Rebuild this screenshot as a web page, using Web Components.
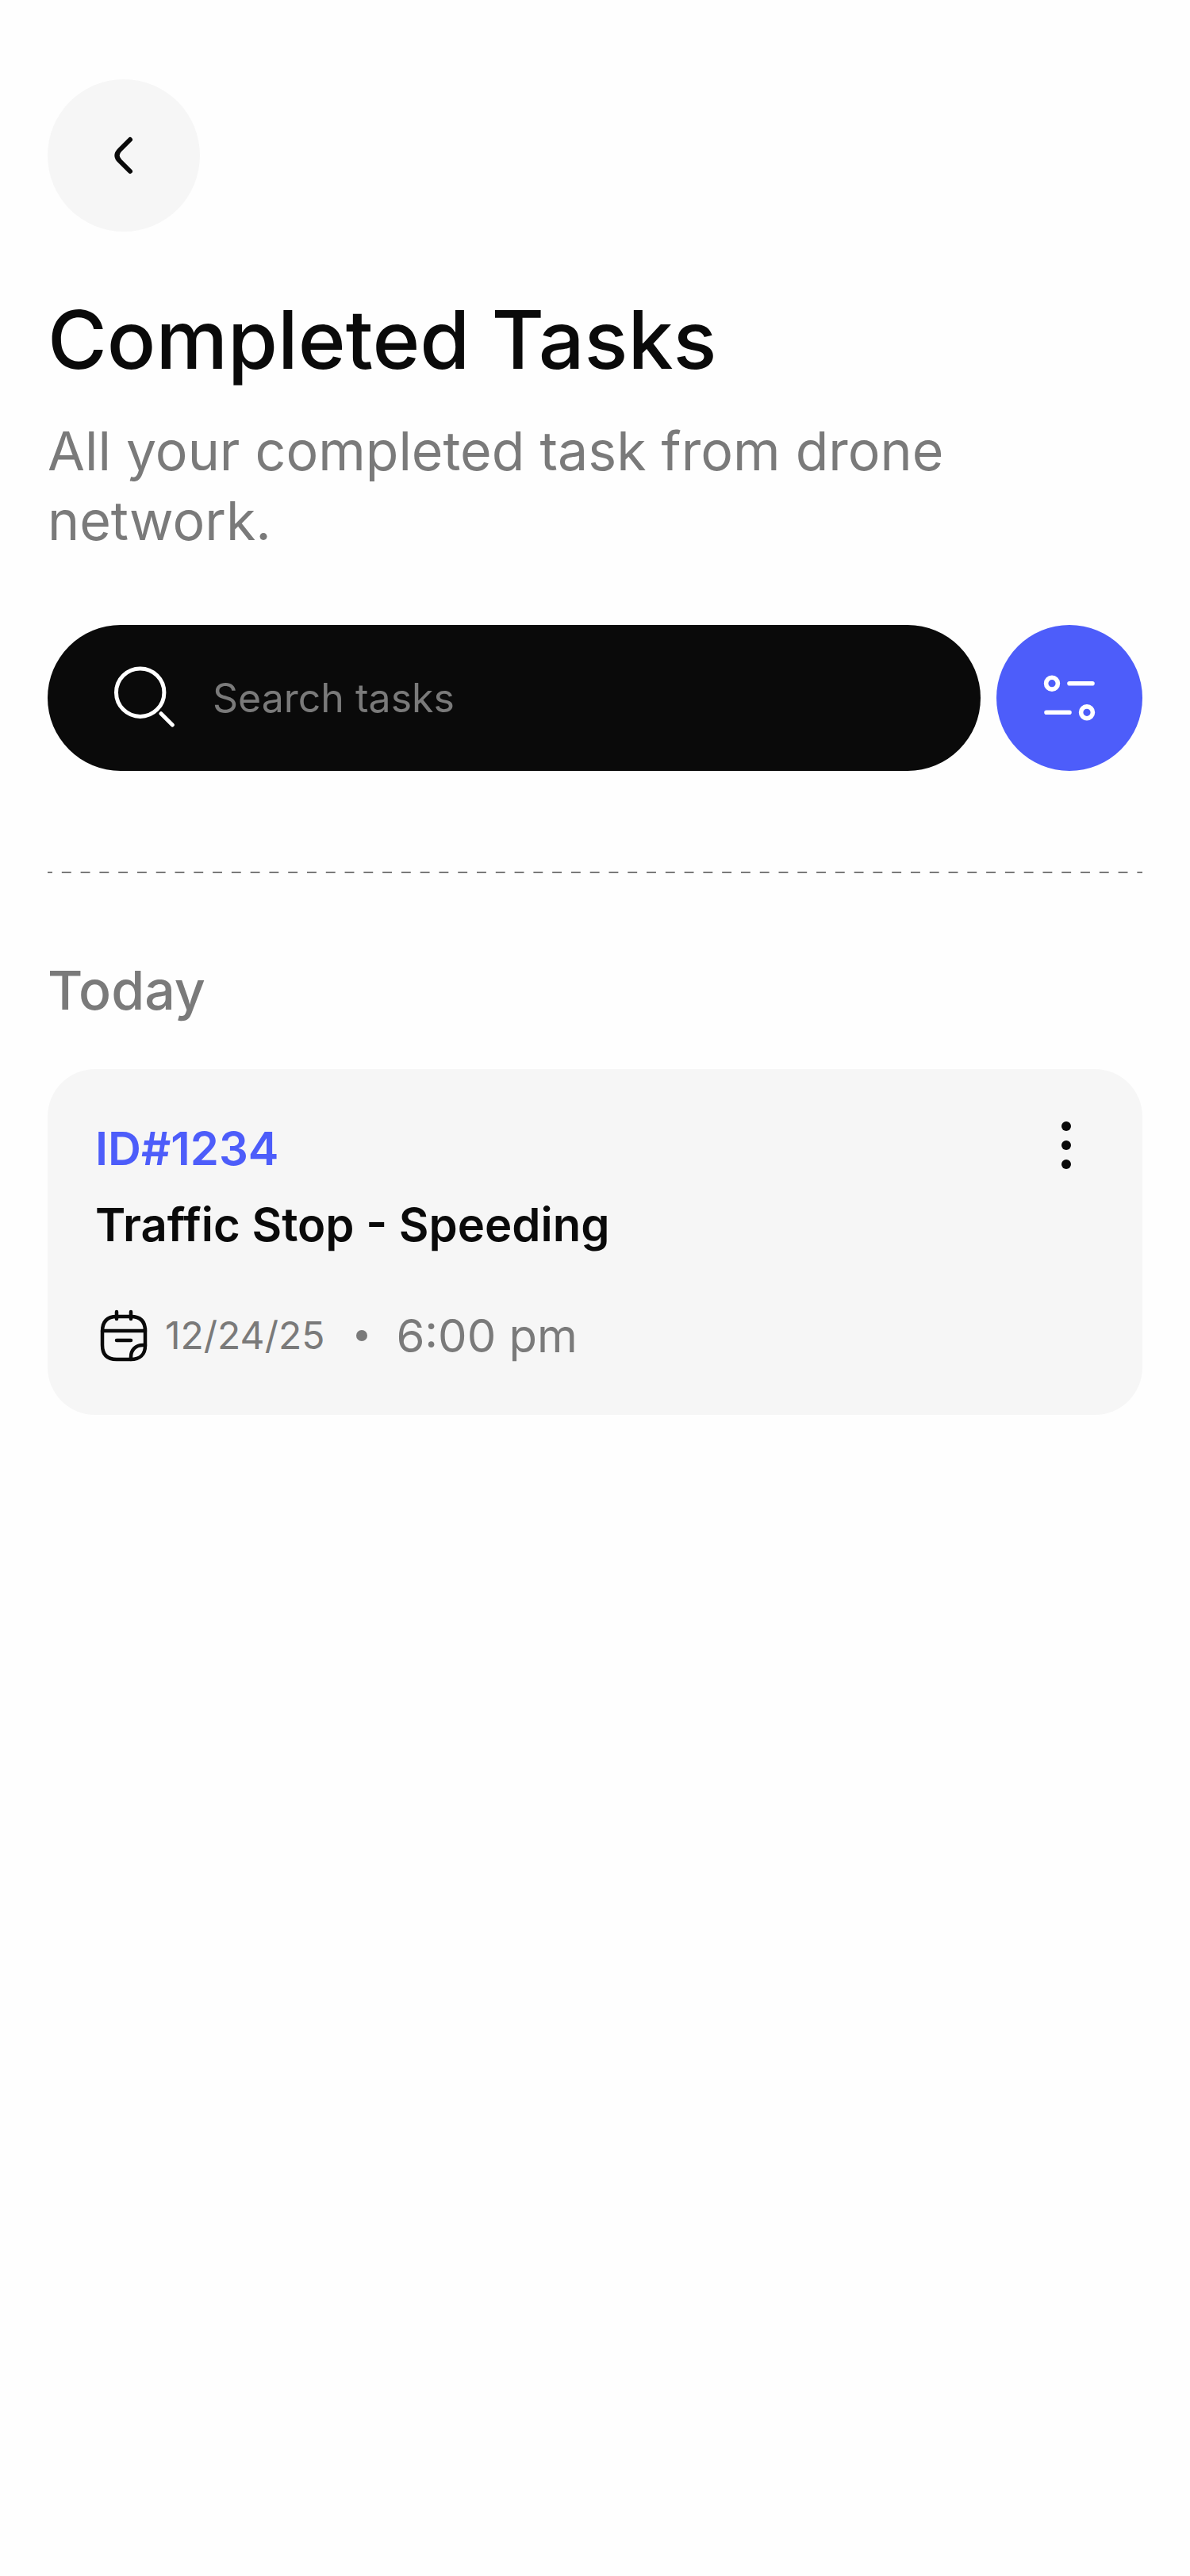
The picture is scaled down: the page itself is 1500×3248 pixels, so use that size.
<!DOCTYPE html>
<html lang="en">
<head>
<meta charset="utf-8">
<meta name="viewport" content="width=device-width, initial-scale=1">
<title>Completed Tasks</title>
<style>
  :root {
    --ink: #0a0a0a;
    --muted: #7a7a7a;
    --accent: #4d5dfa;
    --surface: #f6f6f6;
    --page: #fefefe;
    --text-xl: 102px;
    --text-lg: 68px;
    --text-md: 58px;
    --text-sm: 50px;
    --text-xs: 48px;
  }
  body {
    margin: 0;
    background: var(--page);
    color: var(--ink);
    font-family: Inter, "Liberation Sans", sans-serif;
  }
</style>
</head>
<body>
<tasks-screen></tasks-screen>

<template id="tasks-screen">
  <style>
    :host { display: block; min-height: 100vh; box-sizing: border-box; padding: 100px 60px; }
    main { display: flex; flex-direction: column; }
    page-heading { margin-top: 64px; }
    .tools { display: flex; gap: 20px; margin-top: 88px; }
    search-field { flex: 1; min-width: 0; }
    dashed-rule { margin: 126px 0 98px; }
  </style>
  <main>
    <nav><round-button label="Back" tone="soft">
      <svg width="96" height="96" viewBox="0 0 96 96" fill="none" stroke="currentColor" stroke-width="6" stroke-linecap="round" stroke-linejoin="round"><path d="M56 28 L43 41 Q36 48 43 55 L56 68"/></svg>
    </round-button></nav>
    <page-heading>
      <span slot="title">Completed Tasks</span>
      <span slot="lead">All your completed task from drone network.</span>
    </page-heading>
    <div class="tools">
      <search-field placeholder="Search tasks"></search-field>
      <round-button label="Filter tasks" tone="accent">
        <svg width="96" height="96" viewBox="0 0 96 96" fill="none" stroke="currentColor" stroke-width="5.6" stroke-linecap="round"><circle cx="26" cy="29.7" r="7.4"/><path d="M48 29.7H77M19 66.3H48"/><circle cx="70" cy="66.3" r="7.4"/></svg>
      </round-button>
    </div>
    <dashed-rule></dashed-rule>
    <task-group>
      <span slot="heading">Today</span>
      <task-card>
        <span slot="id">ID#1234</span>
        <span slot="name">Traffic Stop - Speeding</span>
        <time slot="date" datetime="2025-12-24">12/24/25</time>
        <time slot="time" datetime="18:00">6:00 pm</time>
      </task-card>
    </task-group>
  </main>
</template>

<template id="round-button">
  <style>
    :host { display: block; }
    button { display: grid; place-items: center; box-sizing: border-box; width: 192px; height: 192px; padding: 0; border: 0; border-radius: 50%; background: var(--surface); color: var(--ink); cursor: pointer; }
    :host([tone="accent"]) button { width: 184px; height: 184px; background: var(--accent); color: #fff; }
  </style>
  <button type="button"><slot></slot></button>
</template>

<template id="page-heading">
  <style>
    :host { display: flex; flex-direction: column; gap: 24px; }
    h1, p { margin: 0; }
    h1 { font-size: var(--text-xl); font-weight: 500; line-height: 144px; }
    p { max-width: 1280px; color: var(--muted); font-size: var(--text-lg); line-height: 88px; }
  </style>
  <h1><slot name="title"></slot></h1>
  <p><slot name="lead"></slot></p>
</template>

<template id="search-field">
  <style>
    :host { display: block; }
    label { display: flex; align-items: center; gap: 48px; box-sizing: border-box; height: 184px; padding: 0 80px; border-radius: 92px; background: var(--ink); color: #fff; cursor: text; }
    svg { flex: none; }
    input { flex: 1; min-width: 0; height: 80px; padding: 0; border: 0; outline: 0; background: none; color: inherit; font: inherit; font-size: var(--text-sm); }
    input::placeholder { color: var(--muted); opacity: 1; }
  </style>
  <label>
    <svg width="80" height="80" viewBox="0 0 80 80" fill="none" stroke="currentColor" stroke-width="5" stroke-linecap="round" aria-hidden="true"><circle cx="36.7" cy="33.2" r="30.2"/><path d="M63 59.7L77.3 74"/></svg>
    <input type="search" aria-label="Search tasks">
  </label>
</template>

<template id="dashed-rule">
  <style>
    :host { display: block; height: 4px; background: linear-gradient(90deg, var(--muted) 25%, transparent 25% 75%, var(--muted) 75%) left center / 24px 2px round no-repeat; }
  </style>
</template>

<template id="task-group">
  <style>
    :host { display: block; }
    h2 { margin: 0 0 52px; color: var(--muted); font-size: var(--text-lg); font-weight: 500; line-height: 96px; }
  </style>
  <section><h2><slot name="heading"></slot></h2><slot></slot></section>
</template>

<template id="task-card">
  <style>
    :host { display: block; }
    article { display: flex; justify-content: space-between; align-items: flex-start; padding: 60px; border-radius: 60px; background: var(--surface); }
    .body { display: flex; flex-direction: column; gap: 16px; font-size: var(--text-md); line-height: 80px; }
    .id { color: var(--accent); font-weight: 600; }
    h3 { margin: 0; font-size: inherit; font-weight: 600; }
    .when { display: flex; align-items: center; margin-top: 44px; color: var(--muted); }
    .when svg { flex: none; margin-right: 16px; color: var(--ink); }
    .date { font-size: var(--text-xs); }
    .dot { width: 14px; height: 14px; margin: 0 36px 0 40px; border-radius: 50%; background: currentColor; }
    button { display: grid; place-items: center; width: 72px; height: 72px; padding: 0; border: 0; background: none; color: var(--ink); cursor: pointer; }
  </style>
  <article>
    <div class="body">
      <div class="id"><slot name="id"></slot></div>
      <h3><slot name="name"></slot></h3>
      <div class="when">
        <svg width="72" height="72" viewBox="0 0 72 72" fill="none" stroke="currentColor" stroke-width="4.5" stroke-linecap="round" stroke-linejoin="round" aria-hidden="true"><path d="M27 6V15M45 6V15M9 30H63M27 42H45"/><path d="M63 27V49C63 60 56 66 45 66H27C15 66 9 60 9 48V31C9 18 15 12 27 12H45C57 12 63 18 63 30"/><path d="M45 66V63C45 54 51 48 60 48H63"/></svg>
        <span class="date"><slot name="date"></slot></span>
        <span class="dot"></span>
        <span><slot name="time"></slot></span>
      </div>
    </div>
    <button type="button" aria-label="Task options">
      <svg width="72" height="72" viewBox="0 0 72 72" fill="currentColor"><circle cx="36" cy="12" r="6"/><circle cx="36" cy="36" r="6"/><circle cx="36" cy="60" r="6"/></svg>
    </button>
  </article>
</template>

<script>
  class TemplateElement extends HTMLElement {
    constructor() {
      super();
      const template = document.getElementById(this.localName);
      this.attachShadow({ mode: 'open' }).append(template.content.cloneNode(true));
    }
  }

  class RoundButton extends TemplateElement {
    connectedCallback() {
      this.shadowRoot.querySelector('button').setAttribute('aria-label', this.getAttribute('label') || '');
    }
  }

  class SearchField extends TemplateElement {
    connectedCallback() {
      this.shadowRoot.querySelector('input').placeholder = this.getAttribute('placeholder') || '';
    }
  }

  customElements.define('round-button', RoundButton);
  customElements.define('search-field', SearchField);
  customElements.define('page-heading', class extends TemplateElement {});
  customElements.define('dashed-rule', class extends TemplateElement {});
  customElements.define('task-card', class extends TemplateElement {});
  customElements.define('task-group', class extends TemplateElement {});
  customElements.define('tasks-screen', class extends TemplateElement {});
</script>
</body>
</html>
